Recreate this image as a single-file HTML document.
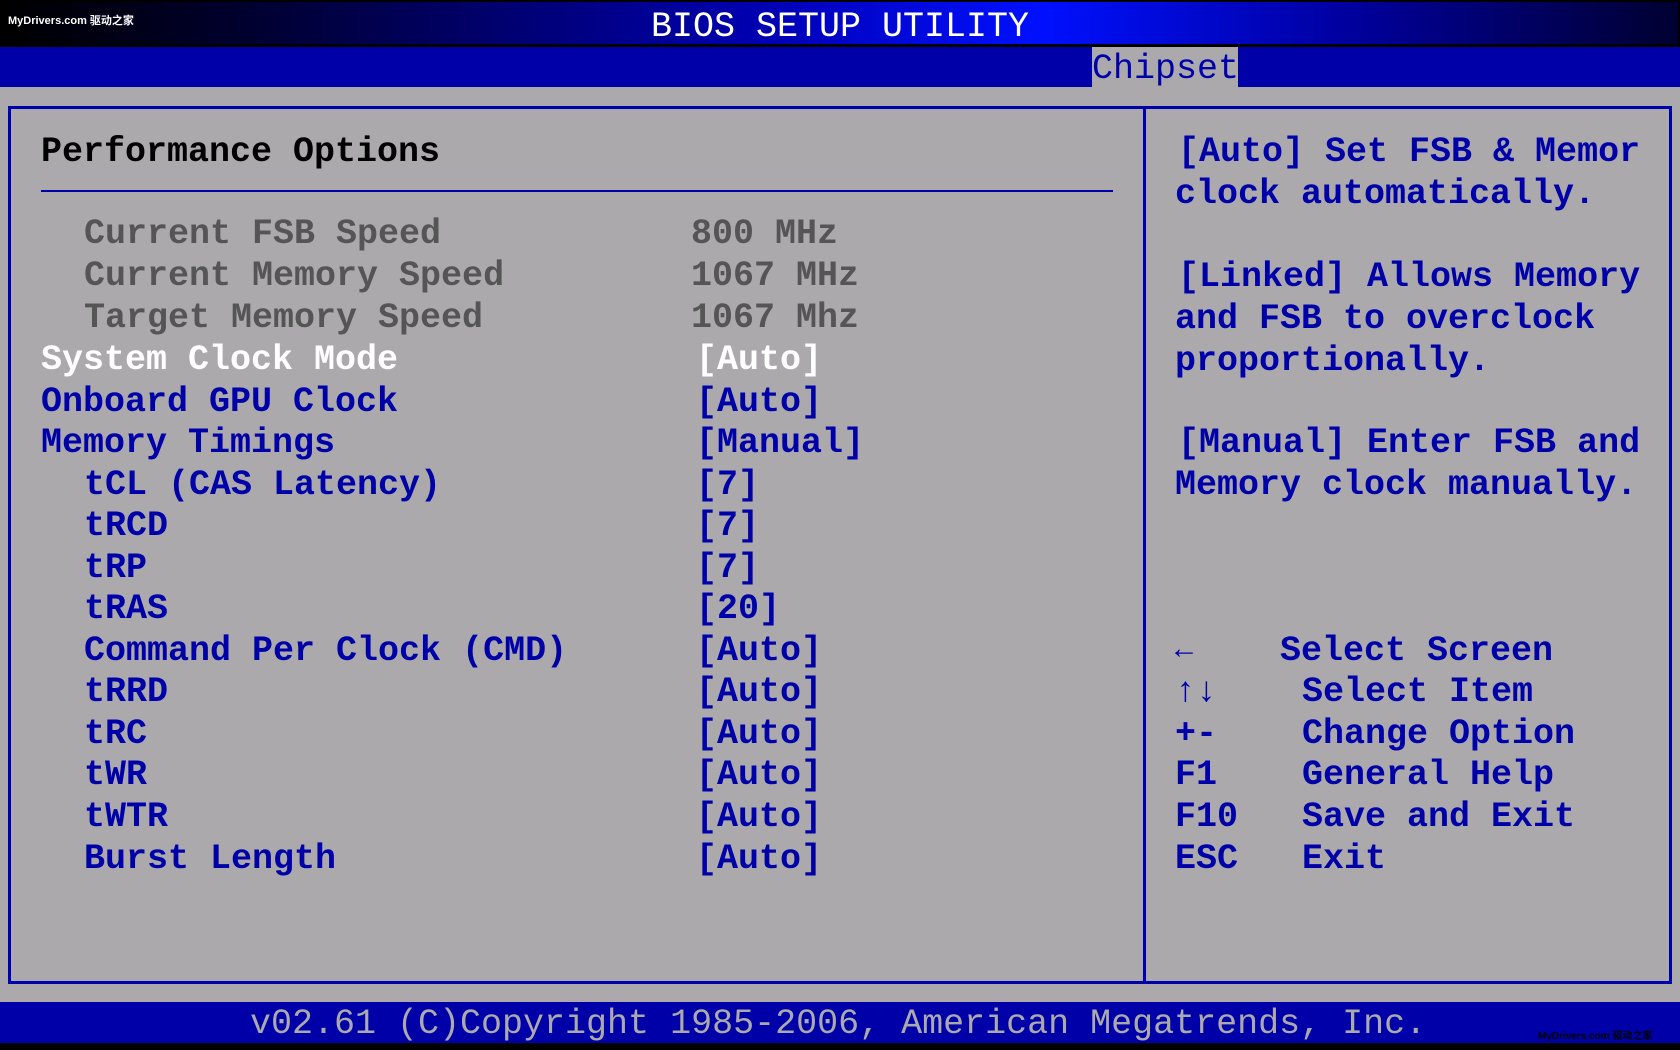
<!DOCTYPE html>
<html><head><meta charset="utf-8"><style>
*{margin:0;padding:0}
body{width:1680px;height:1050px;background:#aca9ad;position:relative;overflow:hidden;font-family:"Liberation Mono",monospace;font-weight:bold;font-size:35px}
.t{position:absolute;height:42px;line-height:42px;white-space:pre;color:#0000a8;transform:translateY(3px)}
.g{color:#555}
.w{color:#fff}
</style></head><body>
<div style="position:absolute;left:0;top:0;width:1680px;height:47px;background:#000"></div>
<div style="position:absolute;left:2px;top:2px;width:1676px;height:42px;background:linear-gradient(90deg,#000 0%,#000030 15%,#0000b0 45%,#0010ff 62%,#0000a0 80%,#000030 100%)"></div>
<div class="t w" style="left:0;width:1680px;text-align:center;top:3px;font-weight:normal">BIOS SETUP UTILITY</div>
<div style="position:absolute;left:8px;top:12px;color:#fff;font-size:11px;font-family:'Liberation Sans','Noto Sans CJK SC',sans-serif">MyDrivers.com 驱动之家</div>
<div style="position:absolute;left:0;top:47px;width:1680px;height:40px;background:#0000a8"></div>
<div style="position:absolute;left:1092px;top:47px;width:146px;height:40px;background:#aca9ad"></div>
<div class="t" style="left:1092px;top:45px;font-weight:normal">Chipset</div>
<div style="position:absolute;left:8px;top:106px;width:1658px;height:872px;border:3px solid #0000a8"></div>
<div style="position:absolute;left:1143px;top:106px;width:3px;height:878px;background:#0000a8"></div>
<div style="position:absolute;left:41px;top:190px;width:1072px;height:2px;background:#0000a8"></div>
<div class="t" style="left:41px;top:128px;color:#000">Performance Options</div>
<div class="t g" style="left:84px;top:210px">Current FSB Speed</div><div class="t g" style="left:691px;top:210px">800 MHz</div>
<div class="t g" style="left:84px;top:252px">Current Memory Speed</div><div class="t g" style="left:691px;top:252px">1067 MHz</div>
<div class="t g" style="left:84px;top:294px">Target Memory Speed</div><div class="t g" style="left:691px;top:294px">1067 Mhz</div>
<div class="t w" style="left:41px;top:336px">System Clock Mode</div><div class="t w" style="left:696px;top:336px">[Auto]</div>
<div class="t" style="left:41px;top:378px">Onboard GPU Clock</div><div class="t" style="left:696px;top:378px">[Auto]</div>
<div class="t" style="left:41px;top:419px">Memory Timings</div><div class="t" style="left:696px;top:419px">[Manual]</div>
<div class="t" style="left:84px;top:461px">tCL (CAS Latency)</div><div class="t" style="left:696px;top:461px">[7]</div>
<div class="t" style="left:84px;top:502px">tRCD</div><div class="t" style="left:696px;top:502px">[7]</div>
<div class="t" style="left:84px;top:544px">tRP</div><div class="t" style="left:696px;top:544px">[7]</div>
<div class="t" style="left:84px;top:585px">tRAS</div><div class="t" style="left:696px;top:585px">[20]</div>
<div class="t" style="left:84px;top:627px">Command Per Clock (CMD)</div><div class="t" style="left:696px;top:627px">[Auto]</div>
<div class="t" style="left:84px;top:668px">tRRD</div><div class="t" style="left:696px;top:668px">[Auto]</div>
<div class="t" style="left:84px;top:710px">tRC</div><div class="t" style="left:696px;top:710px">[Auto]</div>
<div class="t" style="left:84px;top:751px">tWR</div><div class="t" style="left:696px;top:751px">[Auto]</div>
<div class="t" style="left:84px;top:793px">tWTR</div><div class="t" style="left:696px;top:793px">[Auto]</div>
<div class="t" style="left:84px;top:835px">Burst Length</div><div class="t" style="left:696px;top:835px">[Auto]</div>
<div class="t" style="left:1178px;top:128px">[Auto] Set FSB &amp; Memor</div>
<div class="t" style="left:1175px;top:170px">clock automatically.</div>
<div class="t" style="left:1178px;top:253px">[Linked] Allows Memory</div>
<div class="t" style="left:1175px;top:295px">and FSB to overclock</div>
<div class="t" style="left:1175px;top:337px">proportionally.</div>
<div class="t" style="left:1178px;top:419px">[Manual] Enter FSB and</div>
<div class="t" style="left:1175px;top:461px">Memory clock manually.</div>
<div class="t" style="left:1175px;top:627px;font-size:30px">←</div><div class="t" style="left:1280px;top:627px">Select Screen</div>
<div class="t" style="left:1175px;top:668px">↑↓</div><div class="t" style="left:1302px;top:668px">Select Item</div>
<div class="t" style="left:1175px;top:710px">+-</div><div class="t" style="left:1302px;top:710px">Change Option</div>
<div class="t" style="left:1175px;top:751px">F1</div><div class="t" style="left:1302px;top:751px">General Help</div>
<div class="t" style="left:1175px;top:793px">F10</div><div class="t" style="left:1302px;top:793px">Save and Exit</div>
<div class="t" style="left:1175px;top:835px">ESC</div><div class="t" style="left:1302px;top:835px">Exit</div>
<div style="position:absolute;left:0;top:1002px;width:1680px;height:41px;background:#0000a8"></div>
<div style="position:absolute;left:0;top:1043px;width:1680px;height:7px;background:#000"></div>
<div class="t" style="left:250px;top:1000px;color:#aca9ad;font-weight:normal">v02.61 (C)Copyright 1985-2006, American Megatrends, Inc.</div>
<div style="position:absolute;left:1538px;top:1027px;color:#000;font-size:10px;font-family:'Liberation Sans','Noto Sans CJK SC',sans-serif">MyDrivers.com 驱动之家</div>
</body></html>
